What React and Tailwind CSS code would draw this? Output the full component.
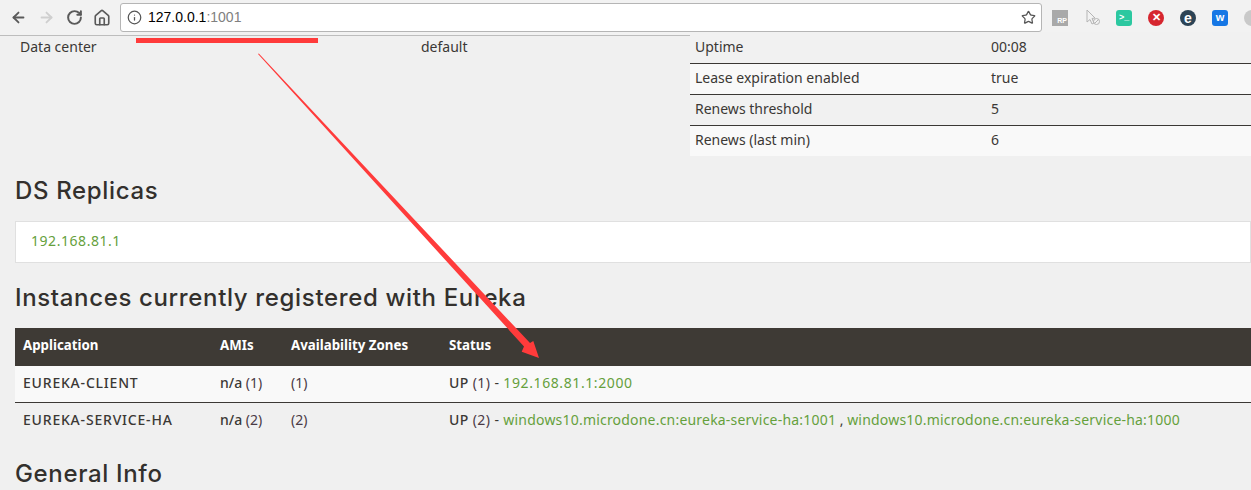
import React from 'react';
import { ArrowLeft, ArrowRight, RotateCw, Home, Info, Star } from 'lucide-react';

const Link = ({ className = 'tracking-[0.2px]', children }) => <a className={`text-[#65a03c] ${className}`}>{children}</a>;
const Count = ({ children }) => <span className="text-[#4a3a45]">{children}</span>;
const Heading = ({ className, children }) => (
  <h1 className={`${className} h-[32px] leading-[32px] text-[24px] font-medium tracking-[0.65px] text-[#33302d] font-['Inter',sans-serif]`}>{children}</h1>
);

function Toolbar() {
  return (
    <div className="flex items-center h-9 bg-[#f2f2f2] border-b border-[#bdbdbd] pl-[10px] font-['Liberation_Sans',sans-serif] overflow-hidden">
      <ArrowLeft className="w-[17px] h-[17px] shrink-0 text-[#5a5a5a]" strokeWidth={2.6} />
      <ArrowRight className="w-[17px] h-[17px] shrink-0 text-[#cfcfcf] ml-[11px]" strokeWidth={2.6} />
      <RotateCw className="w-[17px] h-[17px] shrink-0 text-[#5a5a5a] ml-[11px]" strokeWidth={2.8} />
      <Home className="w-[18px] h-[18px] shrink-0 text-[#5a5a5a] ml-[10px]" strokeWidth={2.2} />
      <div className="flex items-center w-[922px] h-[29px] ml-[9px] bg-white border border-[#b5b5b5] rounded-[3px] pl-[6px] pr-[5px] shrink-0">
        <Info className="w-[15px] h-[15px] shrink-0 text-[#555]" strokeWidth={2} />
        <span className="ml-[6px] text-[14px] text-black">127.0.0.1<span className="text-[#808080]">:1001</span></span>
        <Star className="w-[15px] h-[15px] shrink-0 text-[#555] ml-auto" strokeWidth={2} />
      </div>
      <div className="flex items-center ml-[10px] gap-[16px] shrink-0">
        <div className="w-[16px] h-[16px] bg-[#a9a9a9] flex items-end justify-end text-[7px] font-bold text-white leading-[10px] pr-px">RP</div>
        <svg className="-mr-[2px]" width="18" height="18" viewBox="0 0 18 18" fill="none" stroke="#b5b5b5" strokeWidth="1">
          <path d="M3 1 L3 13 L6 10.5 L8 15 L10 14 L8 9.5 L11 9 Z" />
          <circle cx="12.5" cy="12.5" r="3" />
          <path d="M10.5 14.5 L14.5 10.5" />
        </svg>
        <div className="w-[16px] h-[16px] rounded-[3px] bg-[#2cc8a0] flex items-center pl-[3px] text-white text-[9px] font-bold leading-none">{'>_'}</div>
        <div className="w-[16px] h-[16px] rounded-full bg-[#d6262f] flex items-center justify-center text-white text-[11px] font-bold leading-none">✕</div>
        <div className="w-[16px] h-[16px] rounded-full bg-[#2c4355] flex items-center justify-center text-white text-[14px] font-bold leading-none">e</div>
        <div className="w-[16px] h-[16px] rounded-[3px] bg-[#1677e5] flex items-center justify-center text-white text-[11px] font-bold leading-none">w</div>
        <div className="w-[16px] h-[16px] rounded-full bg-[#c9c9c9] shrink-0"></div>
      </div>
    </div>
  );
}

function Overlay() {
  return (
    <>
      <div className="absolute left-[136px] top-[38px] w-[182px] h-[5px] bg-[#ff3b3b]"></div>
      <svg className="absolute left-0 top-0 pointer-events-none" width="1251" height="490" viewBox="0 0 1251 490">
        <polygon fill="#ff3b3b" points="258,54 258.8,53.4 530,343 533.3,341 539,358 521.7,351.7 524,346.5" />
      </svg>
    </>
  );
}

export default function App() {
  const info = [
    ['Uptime', '00:08', 'bg-[#f1f1f1]'],
    ['Lease expiration enabled', 'true', 'bg-[#f9f9f9]'],
    ['Renews threshold', '5', 'bg-[#f1f1f1]'],
    ['Renews (last min)', '6', 'bg-[#f9f9f9]'],
  ];
  return (
    <div className="relative h-[490px] overflow-hidden bg-[#f0f0f0] text-[#3b3835] text-[14px] font-['Noto_Sans',sans-serif]">
      <Toolbar />

      <div className="flex pl-[15px]">
        <div className="w-[675px] flex pl-[5px] pt-[2px]">
          <div className="w-[401px] leading-[18px]">Data center</div>
          <div className="leading-[18px]">default</div>
        </div>
        <table className="flex-1 mt-[-4px] border-collapse">
          <tbody>
            {info.map(([k, v, bg], i) => (
              <tr key={k} className={`${bg} h-[31px] ${i < 3 ? 'border-b border-[#3b3835]' : ''}`}>
                <td className="pl-[5px] pb-[2px] w-[296px]">{k}</td>
                <td className="pl-[5px] pb-[2px]">{v}</td>
              </tr>
            ))}
          </tbody>
        </table>
      </div>

      <div className="pl-[15px]">
        <Heading className="mt-[19px]">DS Replicas</Heading>
        <div className="mt-[14px] h-[42px] pl-[15px] pb-[3px] flex items-center bg-white border border-[#e0e0e0]">
          <Link className="tracking-[0.55px]">192.168.81.1</Link>
        </div>
        <Heading className="mt-[19px]">Instances currently registered with Eureka</Heading>
        <table className="mt-[14px] w-full border-collapse">
          <thead>
            <tr className="bg-[#3e3a35] text-white h-[38px] text-left text-[13.3px]">
              <th className="pl-[8px] pb-[2px] w-[197px] font-bold">Application</th>
              <th className="pl-[8px] pb-[2px] w-[71px] font-bold">AMIs</th>
              <th className="pl-[8px] pb-[2px] w-[158px] font-bold">Availability Zones</th>
              <th className="pl-[8px] pb-[2px] font-bold">Status</th>
            </tr>
          </thead>
          <tbody>
            <tr className="bg-[#f9f9f9] h-[36px] border-b border-[#3b3835]">
              <td className="pl-[8px] pb-[2px] font-medium tracking-[0.8px]">EUREKA-CLIENT</td>
              <td className="pl-[8px] pb-[2px]"><b className="font-medium">n/a</b> <Count>(1)</Count></td>
              <td className="pl-[8px] pb-[2px]"><Count>(1)</Count></td>
              <td className="pl-[8px] pb-[2px]"><span className="tracking-[0.4px]"><b className="font-medium">UP</b> <Count>(1)</Count> - </span><Link className="tracking-[0.6px]">192.168.81.1:2000</Link></td>
            </tr>
            <tr className="h-[36px]">
              <td className="pl-[8px] pb-[2px] font-medium tracking-[0.8px]">EUREKA-SERVICE-HA</td>
              <td className="pl-[8px] pb-[2px]"><b className="font-medium">n/a</b> <Count>(2)</Count></td>
              <td className="pl-[8px] pb-[2px]"><Count>(2)</Count></td>
              <td className="pl-[8px] pb-[2px]"><span className="tracking-[0.4px]"><b className="font-medium">UP</b> <Count>(2)</Count> - </span><Link>windows10.microdone.cn:eureka-service-ha:1001</Link> , <Link>windows10.microdone.cn:eureka-service-ha:1000</Link></td>
            </tr>
          </tbody>
        </table>
        <Heading className="mt-[20px]">General Info</Heading>
      </div>

      <Overlay />
    </div>
  );
}
